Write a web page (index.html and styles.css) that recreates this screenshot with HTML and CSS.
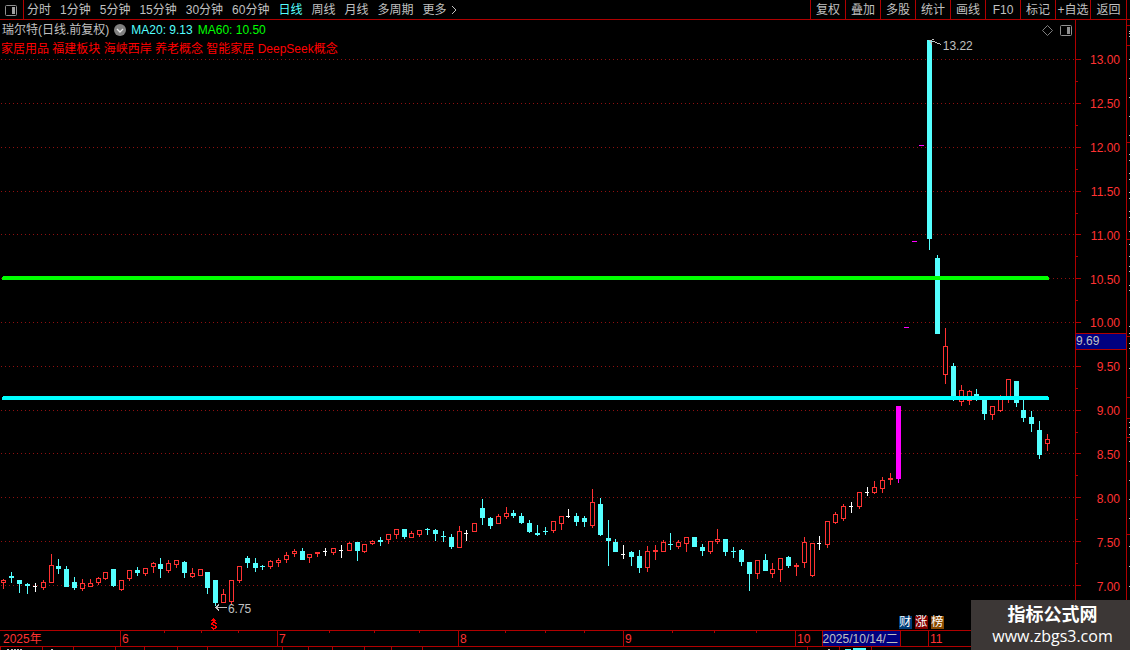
FILE: index.html
```
<!DOCTYPE html>
<html lang="zh-CN">
    <head>
        <meta charset="UTF-8">
        <title>瑞尔特 日线</title>
        <link rel="stylesheet" href="styles.css">
    </head>
    <body>
        <header class="toolbar">
            <button class="panel-btn" aria-label="侧栏">
                <svg width="12" height="12" viewBox="0 0 12 12"><rect x="0.5" y="1.5" width="11" height="10" rx="1" fill="none" stroke="#909090"/><rect x="7" y="3" width="3" height="7" fill="#a0a0a0"/></svg>
            </button>
            <nav class="periods">
                <button>分时</button>
                <button>1分钟</button>
                <button>5分钟</button>
                <button>15分钟</button>
                <button>30分钟</button>
                <button>60分钟</button>
                <button class="active">日线</button>
                <button>周线</button>
                <button>月线</button>
                <button>多周期</button>
                <button class="more">更多<svg width="6" height="10" viewBox="0 0 6 10"><path d="M1 1l4 4-4 4" fill="none" stroke="#c0c0c0"/></svg></button>
            </nav>
            <div class="tools">
                <button>复权</button>
                <button>叠加</button>
                <button>多股</button>
                <button>统计</button>
                <button>画线</button>
                <button>F10</button>
                <button>标记</button>
                <button>+自选</button>
                <button>返回</button>
            </div>
        </header>
        <main class="board">
            <section class="chart">
                <svg id="plot" class="plot" viewBox="0 20 1075 610" preserveAspectRatio="none"></svg>
                <div class="legend">
                    <h1>瑞尔特(日线.前复权)</h1>
                    <button class="fold" aria-label="指标">
                        <svg width="12" height="12" viewBox="0 0 12 12"><circle cx="6" cy="6" r="6" fill="#808080"/><path d="M3 5l3 3 3-3" fill="none" stroke="#e8e8e8" stroke-width="1.4"/></svg>
                    </button>
                    <span class="ma20">MA20: 9.13</span>
                    <span class="ma60">MA60: 10.50</span>
                    <div class="legend-icons">
                        <svg width="11" height="11" viewBox="0 0 11 11"><path d="M5.5 0.5l5 5-5 5-5-5z" fill="none" stroke="#808080"/></svg>
                        <svg width="12" height="11" viewBox="0 0 12 11"><rect x="0.5" y="0.5" width="11" height="10" rx="1" fill="none" stroke="#909090"/><rect x="7" y="2" width="3" height="7" fill="#909090"/></svg>
                    </div>
                </div>
                <p class="concepts">家居用品 福建板块 海峡西岸 养老概念 智能家居 DeepSeek概念</p>
                <span class="callout high">13.22</span>
                <span class="callout low">6.75</span>
                <div class="badges">
                    <span class="fin">财</span>
                    <span class="rise">涨</span>
                    <span class="rank">榜</span>
                </div>
            </section>
            <aside class="prices">
                <svg id="ticks" class="plot" viewBox="0 20 51 610" preserveAspectRatio="none"></svg>
                <span>13.00</span>
                <span>12.50</span>
                <span>12.00</span>
                <span>11.50</span>
                <span>11.00</span>
                <span>10.50</span>
                <span>10.00</span>
                <span>9.50</span>
                <span>9.00</span>
                <span>8.50</span>
                <span>8.00</span>
                <span>7.50</span>
                <span>7.00</span>
                <b class="current">9.69</b>
            </aside>
            <div class="edge">
                <svg id="edge" class="plot" viewBox="0 20 3 610" preserveAspectRatio="none"></svg>
            </div>
        </main>
        <div class="dates">
            <div>2025年</div>
            <div>6<i></i><i></i><i></i></div>
            <div>7<i></i><i></i><i></i></div>
            <div>8<i></i><i></i><i></i></div>
            <div>9<i></i><i></i><i></i></div>
            <div>10</div>
            <div>11</div>
            <time class="cursor-date">2025/10/14/二</time>
        </div>
        <div class="bottom">
            <svg id="bottom" class="plot" viewBox="0 0 1130 3" preserveAspectRatio="none"></svg>
        </div>
        <footer class="site">
            <strong>指标公式网</strong>
            <span>www.zbgs3.com</span>
        </footer>
        <script src="script.js"></script>
    </body>
</html>
```
FILE: styles.css
```
*{
    box-sizing: border-box;
}
body{
    margin: 0;
    min-height: 100vh;
    display: grid;
    grid-template-rows: auto 1fr auto auto;
    position: relative;
    background-color: #000;
    color: #C0C0C0;
    font-family: "Liberation Sans", "Noto Sans CJK SC", sans-serif;
    font-size: 12px;
    line-height: 18px;
    overflow: hidden;
}
button{
    margin: 0;
    padding: 0;
    border: none;
    background: none;
    color: inherit;
    font: inherit;
    white-space: nowrap;
    cursor: pointer;
}
svg{
    display: block;
}
.toolbar{
    display: flex;
    height: 20px;
    border-bottom: 1px solid #B00000;
}
.panel-btn{
    width: 24px;
    padding-left: 5px;
    border-right: 1px solid #B00000;
}
.periods{
    display: flex;
    gap: 9px;
    padding-left: 3px;
}
.periods .active{
    color: #54FFFF;
}
.more{
    display: flex;
    align-items: center;
    gap: 4px;
}
.tools{
    display: flex;
    margin-left: auto;
    margin-right: 3px;
    border-right: 1px solid #B00000;
}
.tools button{
    width: 35px;
    border-left: 1px solid #B00000;
}
.tools button:last-child{
    width: 36px;
}
.board{
    display: grid;
    grid-template-columns: 1fr 51px 4px;
}
.chart, .prices, .edge, .dates, .bottom{
    position: relative;
}
.plot{
    position: absolute;
    top: 0;
    left: 0;
    width: 100%;
    height: 100%;
    shape-rendering: crispEdges;
}
.legend{
    position: relative;
    display: flex;
    align-items: center;
    gap: 5px;
    padding: 1px 3px 0 2px;
}
.legend h1{
    margin: 0;
    font-size: 12px;
    font-weight: normal;
}
.ma20{
    color: #54FFFF;
}
.ma60{
    color: #00FF00;
}
.legend-icons{
    display: flex;
    gap: 7px;
    margin-left: auto;
}
.concepts{
    position: relative;
    margin: 1px 0 0 1px;
    color: #FF0000;
}
.callout{
    position: absolute;
    line-height: 12px;
}
.high{
    left: 87.7%;
    top: 3.3%;
}
.low{
    left: 21.2%;
    top: 95.6%;
}
.badges{
    position: absolute;
    left: 83.6%;
    bottom: 1px;
    display: flex;
    gap: 3px;
    color: #FFF;
    line-height: 13px;
}
.badges span{
    width: 13px;
    height: 13px;
    text-align: center;
}
.fin{
    background-color: #003C78;
}
.rise{
    background-color: #800000;
}
.rank{
    background-color: #8A4A00;
}
.prices{
    display: flex;
    flex-direction: column;
    padding: 18px 6px 21px 0;
    color: #FF3232;
    text-align: right;
}
.prices span{
    flex: 1;
    display: flex;
    align-items: center;
    justify-content: flex-end;
}
.current{
    position: absolute;
    left: 1px;
    right: 0;
    top: 51.3%;
    height: 17px;
    border: solid #B00000;
    border-width: 1px 0;
    background-color: #000080;
    color: #C0C0C0;
    font-weight: normal;
    line-height: 15px;
    text-align: left;
}
.edge{
    border-left: 1px solid #B00000;
}
.dates{
    display: grid;
    grid-template-columns: 120fr 157fr 181fr 165fr 172fr 133fr 202fr;
    height: 16px;
    border-top: 1px solid #B00000;
    color: #FF3232;
    line-height: 16px;
}
.dates div{
    display: flex;
    justify-content: space-between;
    padding-left: 1px;
    padding-right: 38px;
    border-left: 1px solid #B00000;
}
.dates div:first-child{
    padding-left: 3px;
    border-left: none;
}
.dates i{
    width: 1px;
    height: 2px;
    background-color: #B00000;
}
.cursor-date{
    position: absolute;
    left: 72.7%;
    top: 0;
    width: 79px;
    height: 15px;
    border: solid #B00000;
    border-width: 0 1px;
    background-color: #000080;
    color: #C0C0C0;
    white-space: nowrap;
}
.bottom{
    height: 4px;
    border-top: 1px solid #B00000;
}
.site{
    position: absolute;
    right: 0;
    bottom: 0;
    width: 159px;
    height: 50px;
    padding: 4px 0 0 4px;
    background-color: #3C3736;
    color: #FFF;
    display: flex;
    flex-direction: column;
    align-items: center;
}
.site strong{
    font-size: 18px;
    line-height: 22px;
}
.site span{
    font-family: "Open Sans", sans-serif;
    font-size: 16px;
    line-height: 20px;
}
```
FILE: script.js
```
const NS = "http://www.w3.org/2000/svg";
const RED = "#FF3232";
const LINE = "#B00000";
const COLORS = {u: RED, d: "#54FFFF", w: "#FFFFFF", m: "#FF00FF"};

// kind, high, body top, body bottom, low
const candles = [
    ["u",579,580,583,589], ["d",572,576,578,583], ["d",580,580,584,593], ["d",583,584,586,594],
    ["w",583,586,587,592], ["u",580,582,588,590], ["u",554,565,583,583], ["d",559,566,569,574],
    ["d",566,569,587,587], ["d",577,582,588,590], ["u",579,583,589,591], ["u",579,583,587,587],
    ["u",577,578,583,585], ["u",572,572,579,580], ["d",569,569,586,587], ["u",580,580,590,591],
    ["u",570,570,579,581], ["d",567,570,573,576], ["u",568,568,574,576], ["u",562,563,567,573],
    ["d",558,564,569,578], ["u",560,563,571,573], ["u",560,560,565,568], ["d",561,562,573,578],
    ["u",568,573,577,578], ["u",569,569,576,576], ["d",572,572,588,594], ["d",580,580,603,606],
    ["u",589,594,603,603], ["u",580,580,602,604], ["u",566,566,581,583], ["d",556,558,563,568],
    ["d",558,563,568,572], ["d",565,566,567,570], ["u",560,561,567,569], ["u",558,560,563,567],
    ["u",552,555,560,563], ["u",549,551,554,557], ["d",548,551,560,560], ["u",554,554,558,563],
    ["u",552,552,554,557], ["w",548,551,552,556], ["u",548,548,553,555], ["w",545,550,551,558],
    ["u",542,543,551,551], ["d",542,542,551,561], ["u",544,544,552,553], ["u",540,541,544,545],
    ["d",537,540,542,546], ["u",534,534,540,544], ["u",529,529,535,539], ["d",529,529,537,539],
    ["u",531,533,538,538], ["u",530,530,535,537], ["d",528,529,530,535], ["d",529,530,534,541],
    ["d",531,536,537,542], ["d",534,537,547,549], ["u",526,531,548,548], ["w",530,533,534,541],
    ["u",523,523,532,532], ["d",499,508,518,525], ["d",517,518,526,529], ["u",514,516,524,524],
    ["u",507,513,517,519], ["d",510,513,516,518], ["d",513,516,523,524], ["d",520,523,532,533],
    ["d",525,533,535,536], ["d",527,531,532,535], ["u",521,521,531,533], ["u",516,516,524,530],
    ["w",509,516,517,518], ["d",513,516,522,526], ["d",516,518,522,527], ["u",489,502,526,528],
    ["d",498,504,535,536], ["d",520,538,541,566], ["d",539,542,552,552], ["w",545,554,555,559],
    ["d",551,552,557,566], ["d",550,556,568,573], ["u",546,551,568,572], ["u",545,550,552,560],
    ["u",540,542,552,552], ["d",533,544,545,550], ["u",540,542,547,549], ["u",537,537,544,552],
    ["d",537,537,547,547], ["d",544,547,551,556], ["u",541,541,552,554], ["u",529,539,542,544],
    ["d",539,539,552,556], ["d",547,551,552,558], ["d",549,550,562,566], ["d",562,562,574,591],
    ["u",560,560,574,579], ["d",554,560,571,571], ["u",563,569,574,578], ["u",558,558,570,582],
    ["d",556,557,566,568], ["u",563,565,567,576], ["u",537,542,563,568], ["u",543,543,576,577],
    ["w",536,543,544,550], ["u",521,521,545,548], ["u",512,514,523,524], ["u",504,506,519,521],
    ["w",502,506,507,513], ["u",492,492,507,509], ["w",487,492,493,496], ["u",481,487,493,494],
    ["u",477,480,489,493], ["u",473,478,480,485], ["m",406,406,479,483], ["m",327,327,328,328],
    ["m",241,241,242,242], ["m",145,145,146,146], ["d",40,40,239,250], ["d",255,258,334,334],
    ["u",328,346,375,384], ["d",363,366,398,401], ["u",385,390,402,406], ["u",390,391,401,405],
    ["d",389,394,398,401], ["d",398,398,414,420], ["u",406,406,415,420], ["u",395,398,411,412],
    ["u",379,379,400,403], ["d",381,381,403,407], ["d",400,410,418,422], ["d",411,417,424,432],
    ["d",421,430,455,459], ["u",434,439,444,451]
];
const levels = [59, 103, 147, 191, 234, 278, 322, 366, 410, 453, 497, 541, 585];

function add(svg, name, attrs){
    const el = document.createElementNS(NS, name);
    for (const key in attrs) el.setAttribute(key, attrs[key]);
    svg.appendChild(el);
}
function rect(svg, x, y, width, height, fill){
    if (width > 0 && height > 0) add(svg, "rect", {x, y, width, height, fill});
}

const plot = document.getElementById("plot");
levels.forEach(y => {
    add(plot, "path", {d: `M1 ${y + 0.5}H1075`, stroke: "#901010", "stroke-dasharray": "1 3"});
});

candles.forEach(([kind, high, top, bottom, low], i) => {
    const x = Math.floor(3.99 + i * 102 / 13);
    const color = COLORS[kind];
    rect(plot, x, high, 1, top - high, color);
    rect(plot, x, bottom, 1, low - bottom, color);
    if (kind === "u" && bottom - top > 2) {
        add(plot, "rect", {x: x - 1.5, y: top + 0.5, width: 4, height: bottom - top - 1, fill: "#000", stroke: color});
    } else if (kind === "w") {
        rect(plot, x - 2, top, 4, 1, color);
    } else {
        rect(plot, x - 2, top, 5, bottom - top, color);
    }
});

// moving averages
[[276, "#00FF00"], [396, "#00FFFF"]].forEach(([y, color]) => {
    rect(plot, 3, y, 1045, 4, color);
    rect(plot, 2, y + 1, 1047, 3, color);
});

// arrows to the highest and lowest price
add(plot, "path", {d: "M930.5 40.5l11 4M934 39.5l-4 1 2 4", fill: "none", stroke: "#C0C0C0"});
add(plot, "path", {d: "M215.5 607.5H227M219 604.5l-3 3 3 3", fill: "none", stroke: "#C0C0C0"});

// dividend mark, row by row: x, y, width
[
    [213, 618, 1], [212, 619, 3], [211, 620, 5], [213, 621, 2], [212, 622, 4],
    [211, 623, 2], [215, 623, 2], [211, 624, 3], [213, 625, 3], [215, 626, 2],
    [211, 627, 2], [215, 627, 2], [212, 628, 4], [213, 629, 1]
].forEach(([x, y, width]) => rect(plot, x, y, width, 1, "#FF0000"));

const ticks = document.getElementById("ticks");
rect(ticks, 0, 20, 1, 610, LINE);
levels.forEach((y, i) => {
    rect(ticks, 1, y, 5, 1, LINE);
    if (i < levels.length - 1) rect(ticks, 1, y + 22, 2, 1, LINE);
});

const edge = document.getElementById("edge");
[25, 45, 142, 239, 336, 397, 418, 437, 534].forEach(y => rect(edge, 0, y, 3, 1, LINE));
[31, 33, 36, 59, 78, 97, 116, 135, 154, 160, 173, 179, 192, 198, 211, 217, 231, 244, 256, 266, 271, 285, 290, 326, 333, 343, 348, 368, 422, 427, 434, 441, 461, 480, 499, 518, 546, 566, 586].forEach(y => rect(edge, 2, y, 1, 1, "#C0C0C0"));

const bottom = document.getElementById("bottom");
[0, 42, 73, 115, 144, 177, 207, 282, 308, 332, 364, 391, 422, 807, 839, 871].forEach(x => rect(bottom, x, 0, 1, 3, LINE));
[7, 11, 14, 17, 20, 51, 828].forEach(x => rect(bottom, x, 2, 2, 1, "#C0C0C0"));
rect(bottom, 845, 2, 6, 1, "#54FFFF");
rect(bottom, 853, 1, 13, 2, "#54FFFF");
```
